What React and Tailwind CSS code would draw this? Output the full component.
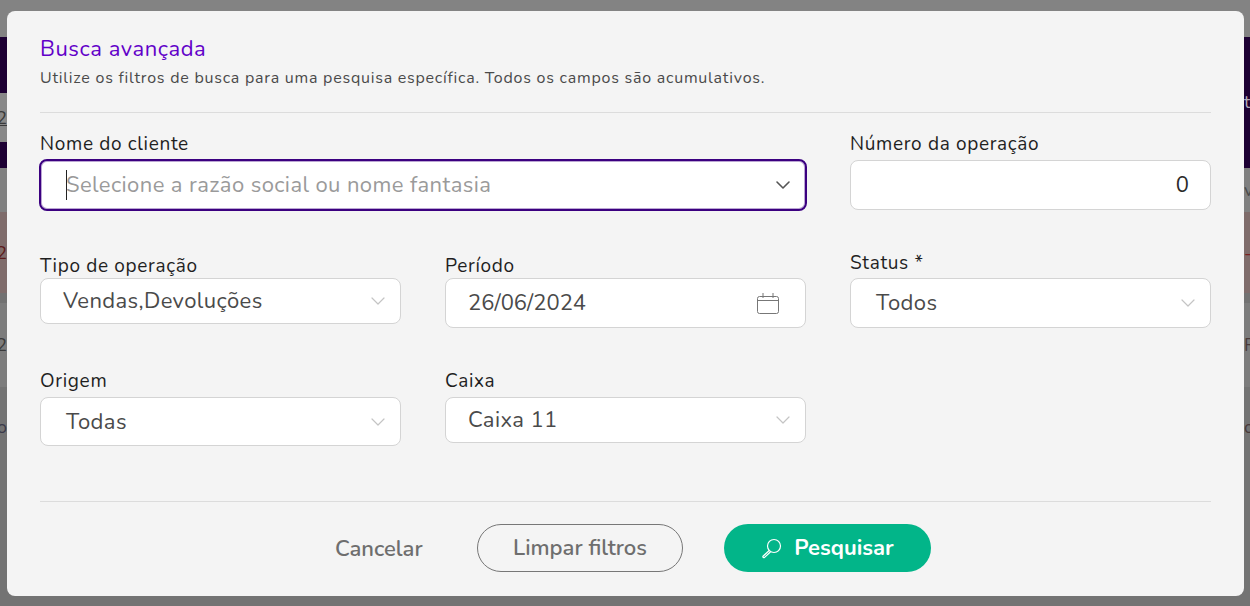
import React from "react";
import { ChevronDown } from "lucide-react";

// the page behind the dialog, only its edges show
const BackRow = ({ height, bg, left, right, leftClass = "", rightClass = "" }) => (
    <div className={`flex justify-between shrink-0 ${height} ${bg}`}>
        <div className={`w-[7px] overflow-hidden flex justify-end items-center text-[18px] leading-none ${leftClass}`}>{left}</div>
        <div className={`w-[6px] overflow-hidden flex items-center text-[18px] leading-none ${rightClass}`}>{right}</div>
    </div>
);

const Backdrop = () => (
    <div className="flex flex-col h-[606px] bg-[#737373]">
        <BackRow height="h-[37px]" bg="bg-[#838383]" />
        <BackRow height="h-[56px]" bg="bg-[#1d0033]" />
        <BackRow height="h-[49px]" bg="bg-[#888888]" left="2" leftClass="text-[#3a3a3a] underline" right="ta" rightClass="bg-[#1d0033] text-[#b0a8b8] items-start" />
        <BackRow height="h-[26px]" bg="bg-[#1d0033]" />
        <BackRow height="h-[44px]" bg="bg-[#808080]" right="v" rightClass="text-[#4a4a4a]" />
        <BackRow height="h-[81px]" bg="bg-[#7f6c6b]" left="2" leftClass="text-[#5c1a1a]" right="-" rightClass="text-[#7a1f1f]" />
        <BackRow height="h-[10px]" bg="bg-[#727272]" />
        <BackRow height="h-[84px]" bg="bg-[#7c7c7c]" left="2" leftClass="text-[#3a3a3a]" right="R" rightClass="text-[#4a3a3a]" />
        <BackRow height="h-[80px]" bg="bg-[#737373]" left="o" leftClass="text-[#3a3a4a]" right="or" rightClass="text-[#4a3a3a]" />
    </div>
);

const Label = ({ children, className = "" }) => (
    <div className={`text-[19px] leading-[22px] tracking-[0.67px] text-[#1f1f1f] ${className}`}>{children}</div>
);

const SelectBox = ({ value, className = "", textClass = "pl-[22px]" }) => (
    <div className={`flex items-center justify-between bg-white border border-[#d4d4d4] rounded-lg pr-[10px] ${textClass} ${className}`}>
        <span className="text-[22px] leading-none tracking-[0.41px] text-[#4a4a4a]">{value}</span>
        <ChevronDown size={24} strokeWidth={1.2} className="text-[#c4c4c4]" />
    </div>
);

const CalendarIcon = () => (
    <svg width="24" height="24" viewBox="0 0 24 24" fill="none" stroke="#777" strokeWidth="1" className="shrink-0">
        <rect x="1.5" y="5.5" width="21" height="17" rx="2" />
        <path d="M1.5 9.5 H22.5 M7 2 V7 M17 2 V7" />
    </svg>
);

const App = () => (
    <div className="relative h-[606px] overflow-hidden font-['Nunito','Open_Sans',sans-serif]">
        <Backdrop />
        <div className="absolute left-[7px] top-[11px] w-[1237px] h-[585px] bg-[#f4f4f4] rounded-lg px-[33px] pt-[24px] flex flex-col">
            <h1 className="text-[22px] leading-[28px] tracking-[0.57px] text-[#6200c9]">Busca avançada</h1>
            <p className="mt-[5px] text-[16px] leading-[21px] tracking-[0.76px] text-[#4a4a4a]">
                Utilize os filtros de busca para uma pesquisa específica. Todos os campos são acumulativos.
            </p>
            <div className="mt-[23px] h-px bg-[#dcdcdc]" />

            <div className="flex gap-[44px] mt-[20px]">
                <div className="w-[766px]">
                    <Label>Nome do cliente</Label>
                    <div className="-mx-px mt-[4px] h-[52px] bg-white border-2 border-[#3b0080] shadow-[inset_0_0_0_1px_rgba(59,0,128,0.35)] rounded-lg flex items-center justify-between pl-[25px] pr-[10px]">
                        <span className="border-l border-[#222] indent-[-1px] text-[22px] leading-[30px] tracking-[0.41px] text-[#9a9a9a]">Selecione a razão social ou nome fantasia</span>
                        <ChevronDown size={24} strokeWidth={1.6} className="text-[#555]" />
                    </div>
                </div>
                <div className="w-[361px]">
                    <Label>Número da operação</Label>
                    <div className="mt-[5px] h-[50px] bg-white border border-[#d4d4d4] rounded-lg flex items-center justify-end pr-[21px]">
                        <span className="text-[22px] text-[#2a2a2a]">0</span>
                    </div>
                </div>
            </div>

            <div className="grid grid-cols-[361px_361px_361px] gap-x-[44px] mt-[40px]">
                <div>
                    <Label className="mt-[4px]">Tipo de operação</Label>
                    <SelectBox value="Vendas,Devoluções" className="mt-[1px] h-[46px]" />
                </div>
                <div>
                    <Label className="mt-[4px]">Período</Label>
                    <div className="mt-[1px] h-[50px] bg-white border border-[#d4d4d4] rounded-lg flex items-center justify-between pl-[22px] pr-[25px]">
                        <span className="text-[22px] text-[#4a4a4a]">26/06/2024</span>
                        <CalendarIcon />
                    </div>
                </div>
                <div>
                    <Label className="mt-[1px]">Status *</Label>
                    <SelectBox value="Todos" className="mt-[4px] h-[50px]" textClass="pl-[25px]" />
                </div>
            </div>

            <div className="grid grid-cols-[361px_361px] gap-x-[44px] mt-[42px]">
                <div>
                    <Label>Origem</Label>
                    <SelectBox value="Todas" className="mt-[5px] h-[49px]" textClass="pl-[25px]" />
                </div>
                <div>
                    <Label>Caixa</Label>
                    <SelectBox value="Caixa 11" className="mt-[5px] h-[46px]" />
                </div>
            </div>

            <div className="mt-[55px] h-px bg-[#dcdcdc]" />

            <div className="flex items-center mt-[22px] pl-[295px]">
                <button className="w-[87px] pt-[3px] text-[22px] font-semibold whitespace-nowrap text-[#6e6e6e]">Cancelar</button>
                <button className="ml-[55px] w-[206px] h-[48px] rounded-full border border-[#777] text-[22px] font-semibold text-[#6e6e6e]">Limpar filtros</button>
                <button className="ml-[41px] w-[207px] h-[48px] rounded-full bg-[#02b589] text-white text-[22px] font-bold flex items-center justify-center gap-[12px]">
                    <svg width="21" height="21" viewBox="0 0 21 21" fill="none" stroke="currentColor" strokeWidth="1.2">
                        <circle cx="13" cy="8" r="6.5" />
                        <path d="M8.2 12.5 L2 18.2 Q1.6 18.8 2.4 19.5 Q3 20 3.6 19.4 L9.6 13.8" />
                    </svg>
                    Pesquisar
                </button>
            </div>
        </div>
    </div>
);

export default App;
